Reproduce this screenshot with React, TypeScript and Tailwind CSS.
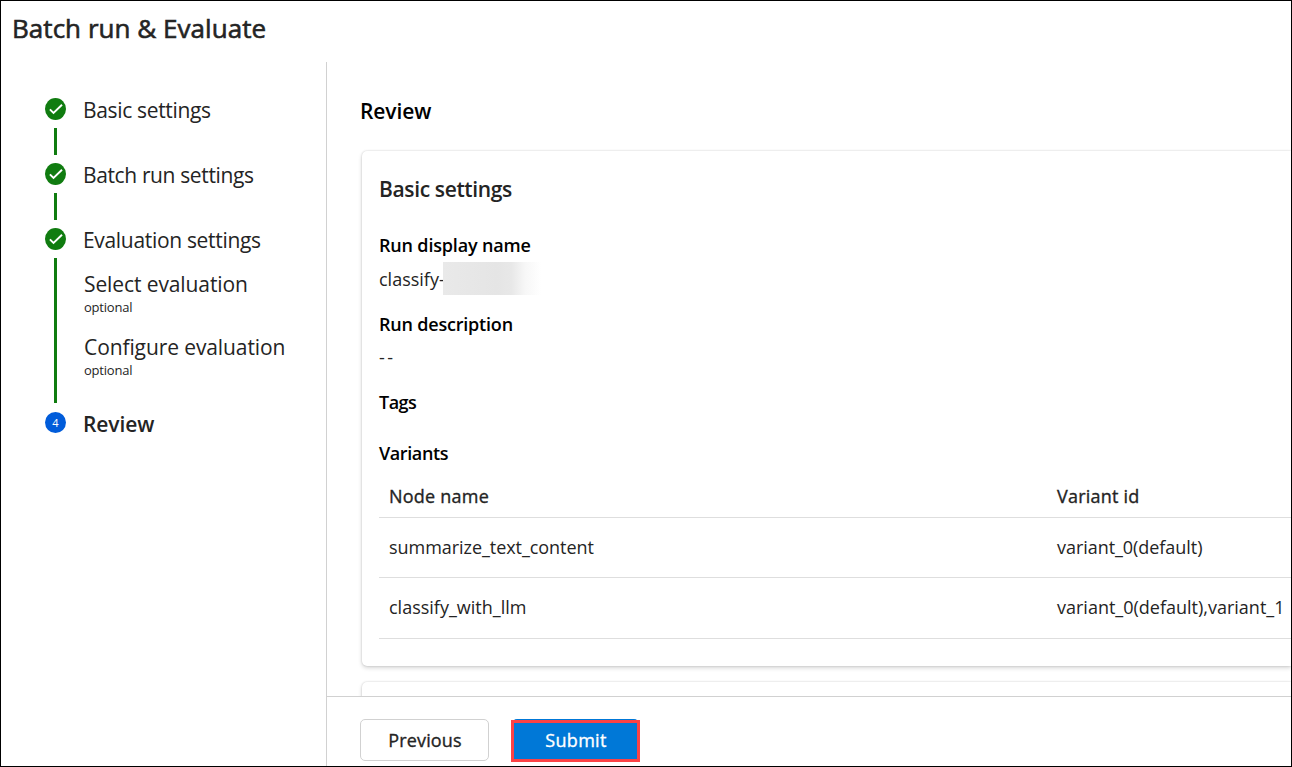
import React from "react";

type StepProps = {
  label: string;
  className: string;
  line: string;
  children?: React.ReactNode;
};

function Check() {
  return (
    <svg width="21" height="22" viewBox="0 0 21 22" className="block shrink-0">
      <ellipse cx="10.5" cy="11" rx="10.5" ry="10.9" fill="#107c10" />
      <path d="M4.9 11.4 8.5 15 17 6.8" fill="none" stroke="#fff" strokeWidth="1.9" />
    </svg>
  );
}

function Step({ label, className, line, children }: StepProps) {
  return (
    <li className="flex">
      <div className="flex w-[21px] flex-col items-center">
        <Check />
        <div className={`mt-2 w-[3px] bg-[#107c10] ${line}`} />
      </div>
      <div className="ml-[17px]">
        <div className={`text-[21px] leading-6 ${className}`}>{label}</div>
        {children}
      </div>
    </li>
  );
}

function SubStep({ label, className }: { label: string; className: string }) {
  return (
    <div className={`ml-px ${className}`}>
      <div className="text-[21px] leading-[26px] tracking-[-0.1px]">{label}</div>
      <div className="mt-px text-[13px] leading-[18px] tracking-[-0.22px]">optional</div>
    </div>
  );
}

function Row({ node, variant, className }: { node: string; variant: string; className: string }) {
  return (
    <div className={`ml-px flex border-b border-[#dedede] pl-[10px] leading-6 ${className}`}>
      <div className="w-[668px] shrink-0">{node}</div>
      <div className="whitespace-nowrap">{variant}</div>
    </div>
  );
}

export default function App() {
  return (
    <div className="flex h-[767px] w-[1292px] flex-col overflow-hidden border border-black bg-white font-['Open_Sans',sans-serif] text-[#242424]">
      <h1 className="h-[61px] shrink-0 pl-[11px] pt-[10px] text-[26px] leading-[34px] tracking-[0.04px] [-webkit-text-stroke:0.6px_#242424]">
        Batch run &amp; Evaluate
      </h1>
      <div className="flex min-h-0 flex-1">
        <aside className="w-[326px] shrink-0 border-r border-[#d1d1d1] pl-[44px] pt-[36px]">
          <ol>
            <Step label="Basic settings" className="tracking-[-0.33px]" line="mb-2 h-[27px]" />
            <Step label="Batch run settings" className="tracking-[-0.37px]" line="mb-2 h-[27px]" />
            <Step label="Evaluation settings" className="tracking-[-0.32px]" line="mb-[9px] h-[145px]">
              <SubStep label="Select evaluation" className="mt-[19px]" />
              <SubStep label="Configure evaluation" className="mt-[18px]" />
            </Step>
            <li className="flex">
              <div className="flex size-[21px] items-center justify-center rounded-full bg-[#015cda] text-[11px] leading-none text-white">
                4
              </div>
              <div className="ml-[17px] text-[21px] font-semibold leading-6 tracking-[-0.1px]">Review</div>
            </li>
          </ol>
        </aside>
        <main className="flex min-w-0 flex-1 flex-col">
          <div className="min-h-0 flex-1 overflow-hidden pl-[35px] pt-[35px]">
            <h2 className="-ml-[2px] text-[21px] font-semibold leading-7 tracking-[-0.1px] text-black">Review</h2>
            <section className="mt-[26px] h-[515px] rounded-l-[5px] bg-white pl-4 pt-6 text-[18px] leading-6 shadow-[0_0_2px_rgba(0,0,0,0.18),0_2px_4px_rgba(0,0,0,0.16)]">
              <h3 className="ml-px text-[21px] font-semibold leading-7 tracking-[-0.36px]">Basic settings</h3>
              <div className="ml-px mt-[30px] font-semibold tracking-[-0.17px] text-black">Run display name</div>
              <div className="mt-[10px] flex">
                <span className="ml-px w-[64px]">classify-</span>
                <span className="-mb-1 -mt-[5px] h-[33px] w-[98px] bg-[linear-gradient(90deg,#e9e9e9_0%,#e5e5e5_55%,#e8e8e8_70%,#f7f7f7_84%,#ffffff_100%)]" />
              </div>
              <div className="ml-px mt-[21px] font-semibold tracking-[-0.2px] text-black">Run description</div>
              <div className="ml-px mt-[9px] tracking-[2.5px]">--</div>
              <div className="ml-px mt-[21px] font-semibold tracking-[-0.5px] text-black">Tags</div>
              <div className="ml-px mt-[27px] font-semibold tracking-[-0.4px] text-black">Variants</div>
              <Row node="Node name" variant="Variant id" className="h-[53px] pt-[19px] tracking-[0.22px] [-webkit-text-stroke:0.35px_#242424]" />
              <Row node="summarize_text_content" variant="variant_0(default)" className="h-[60px] pt-[17px] tracking-[-0.05px]" />
              <Row node="classify_with_llm" variant="variant_0(default),variant_1" className="h-[61px] pt-[17px]" />
            </section>
            <section className="mt-4 h-[60px] rounded-l-[5px] bg-white shadow-[0_0_2px_rgba(0,0,0,0.18),0_2px_4px_rgba(0,0,0,0.16)]" />
          </div>
          <footer className="flex h-[70px] shrink-0 gap-[23px] border-t border-[#d1d1d1] pl-[33px] pt-[22px] text-[18px]">
            <button className="h-[42px] w-[129px] rounded-[5px] border border-[#d1d1d1] bg-white pl-px leading-10 tracking-[0.15px] [-webkit-text-stroke:0.35px_#242424]">
              Previous
            </button>
            <button className="relative h-[42px] w-[127px] rounded-[5px] bg-[#0078d7] pl-px leading-[42px] tracking-[0.3px] text-white [-webkit-text-stroke:0.35px_#fff]">
              Submit
              <span className="absolute -left-px top-px h-[42px] w-[129px] border-[3px] border-[#fb4245]" />
            </button>
          </footer>
        </main>
      </div>
    </div>
  );
}
